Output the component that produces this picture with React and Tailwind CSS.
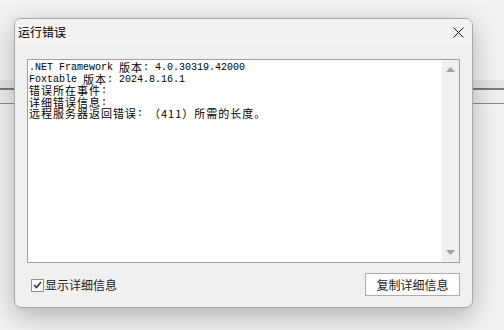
const cjk = "font-['Noto_Sans_CJK_SC'] text-[11px] tracking-[1px]";
const mono = "font-['Liberation_Mono'] text-[10px]";

const lines = [
  [[".NET Framework ", 0], ["版本", 1], [": 4.0.30319.42000", 0]],
  [["Foxtable ", 0], ["版本", 1], [": 2024.8.16.1", 0]],
  [["错误所在事件", 1], [":", 0]],
  [["详细错误信息", 1], [":", 0]],
  [["远程服务器返回错误", 1], [": ", 0], ["（411）所需的长度。", 1]],
];

function Line({ parts }) {
  return (
    <div className="h-[11.5px] flex items-center whitespace-pre text-black">
      {parts.map(([t, isCjk], i) => (
        <span key={i} className={(isCjk ? cjk : mono) + " leading-[11px]"}>
          {t}
        </span>
      ))}
    </div>
  );
}

function Triangle({ up }) {
  return (
    <svg width="9" height="5" viewBox="0 0 9 5">
      <path d={up ? "M0 5 L4.5 0 L9 5 Z" : "M0 0 L4.5 5 L9 0 Z"} fill="#a3a3a3" />
    </svg>
  );
}

export default function App() {
  return (
    <div className="w-[504px] h-[330px] bg-[#f3f3f3] relative overflow-hidden font-['Noto_Sans_CJK_SC',sans-serif]">
      {/* window behind */}
      <div className="absolute left-0 right-0 top-[80px] flex flex-col">
        <div className="h-[8px] bg-[#e6e6e6]" />
        <div className="h-[2px] bg-[#7c7c7c]" />
        <div className="h-[13px] bg-[#f0f0f0]" />
        <div className="h-[1px] bg-[#8a8a8a]" />
        <div className="h-[6px] bg-[#f4f4f4]" />
      </div>

      <div className="relative ml-[14px] mt-[18px] w-[459px] h-[290px] rounded-[7px] border border-[#a9a9a9] bg-[#f0f0f0] shadow-[0_8px_28px_rgba(0,0,0,0.28)] flex flex-col overflow-hidden">
        {/* title bar */}
        <div className="h-[25px] bg-[#f3f3f3] flex items-center justify-between pl-[3px] pr-[8px]">
          <span className="text-[12px] leading-none text-black">运行错误</span>
          <svg width="11" height="11" viewBox="0 0 11 11" className="mt-[2px]">
            <path d="M0.5 0.5 L10.5 10.5 M10.5 0.5 L0.5 10.5" stroke="#111" strokeWidth="1" />
          </svg>
        </div>

        {/* body */}
        <div className="flex-1 flex flex-col px-[12px] pt-[15px]">
          <div className="h-[204px] border border-[#a0a0a0] bg-white flex">
            <div className="flex-1 pl-[1px] pt-[2px]">
              {lines.map((p, i) => (
                <Line key={i} parts={p} />
              ))}
            </div>
            <div className="w-[17px] bg-[#f0f0f0] flex flex-col items-center justify-between pt-[7px] pb-[7px]">
              <Triangle up />
              <Triangle />
            </div>
          </div>

          <div className="flex items-center justify-between mt-[10px] pl-[4px]">
            <label className="flex items-center gap-[1px] mt-[1px]">
              <span className="w-[13px] h-[13px] border border-[#8f8f8f] bg-white flex items-center justify-center">
                <svg width="9" height="8" viewBox="0 0 9 8">
                  <path d="M1 4 L3.5 6.5 L8 1" stroke="#333" strokeWidth="1.6" fill="none" />
                </svg>
              </span>
              <span className="text-[12px] leading-none text-[#222]">显示详细信息</span>
            </label>
            <button className="w-[95px] h-[23px] border border-[#adadad] bg-[#fdfdfd] text-[12px] leading-none text-[#222]">
              复制详细信息
            </button>
          </div>
        </div>
      </div>
    </div>
  );
}
